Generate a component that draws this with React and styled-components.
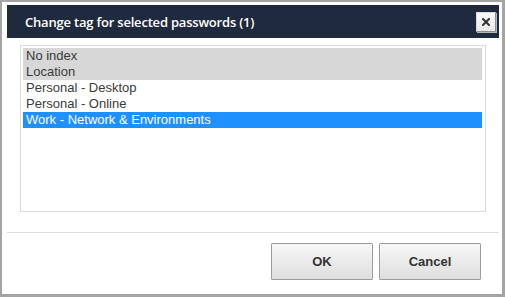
import styled, { createGlobalStyle } from "styled-components";

const GlobalStyle = createGlobalStyle`
  html, body {
    margin: 0;
    padding: 0;
    background: #a4a4a4;
  }
`;

// STYLING
const Frame = styled.div`
  width: 505px;
  height: 297px;
  box-sizing: border-box;
  border-style: solid;
  border-color: #a4a4a4;
  border-width: 2px 3px 3px 2px;
  background: #fff;
  padding: 3px 3px 0 5px;
  display: flex;
  flex-direction: column;
`;
const TitleBar = styled.div`
  height: 33px;
  background: #1f2a3e;
  display: flex;
  align-items: center;
  padding: 0 3px 0 18px;
`;
const Title = styled.h1`
  margin: 0;
  flex: 1;
  color: #fff;
  font-family: "Open Sans", "Liberation Sans", sans-serif;
  font-weight: 600;
  font-size: 13px;
  letter-spacing: -0.2px;
`;
const CloseButton = styled.button`
  width: 20px;
  height: 20px;
  margin-top: 1px;
  padding: 0;
  box-sizing: border-box;
  border: 1px solid #d8d8d8;
  border-right-color: #8c8c8c;
  border-bottom-color: #8c8c8c;
  box-shadow: 1px 1px 0 #b8b8b8;
  background: linear-gradient(#fafafa, #e9e9e9);
  display: flex;
  align-items: center;
  justify-content: center;
  cursor: pointer;
`;
const Body = styled.div`
  padding: 7px 13px 0;
`;
const ListBox = styled.div`
  height: 167px;
  box-sizing: border-box;
  border: 1px solid #dcdcdc;
  padding: 2px 3px 2px 2px;
  display: flex;
  flex-direction: column;
`;
const Option = styled.div`
  height: 16px;
  line-height: 16px;
  padding-left: 3px;
  font-family: "Liberation Sans", Arial, sans-serif;
  font-size: 13px;
  color: ${(p) => (p.$active ? "#fff" : "#3a3a3a")};
  background: ${(p) =>
    p.$active ? "#1e90ff" : p.$marked ? "#d7d7d7" : "transparent"};
  white-space: nowrap;
`;
const Divider = styled.hr`
  margin: 20px 0 0;
  border: none;
  border-top: 1px solid #dcdcdc;
`;
const Footer = styled.div`
  display: flex;
  justify-content: flex-end;
  gap: 6px;
  padding: 10px 18px 0 0;
`;
const Button = styled.button`
  width: 102px;
  height: 37px;
  box-sizing: border-box;
  border: 1px solid #9d9d9d;
  border-radius: 1px;
  background: linear-gradient(#f7f7f7, #dedede);
  font-family: "Liberation Sans", Arial, sans-serif;
  font-size: 13px;
  font-weight: 700;
  color: #333;
  cursor: pointer;
`;

const options = [
  { label: "No index", marked: true },
  { label: "Location", marked: true },
  { label: "Personal - Desktop" },
  { label: "Personal - Online" },
  { label: "Work - Network & Environments", active: true },
];

const App = () => {
  return (
    <>
      <GlobalStyle />
      <Frame>
        <TitleBar>
          <Title>Change tag for selected passwords (1)</Title>
          <CloseButton aria-label="Close">
            <svg width="8" height="8" viewBox="0 0 8 8">
              <path
                d="M1 1L7 7M7 1L1 7"
                stroke="#333"
                strokeWidth="2"
                strokeLinecap="square"
              />
            </svg>
          </CloseButton>
        </TitleBar>
        <Body>
          <ListBox>
            {options.map((o) => (
              <Option key={o.label} $marked={o.marked} $active={o.active}>
                {o.label}
              </Option>
            ))}
          </ListBox>
        </Body>
        <Divider />
        <Footer>
          <Button>OK</Button>
          <Button>Cancel</Button>
        </Footer>
      </Frame>
    </>
  );
};

export default App;
